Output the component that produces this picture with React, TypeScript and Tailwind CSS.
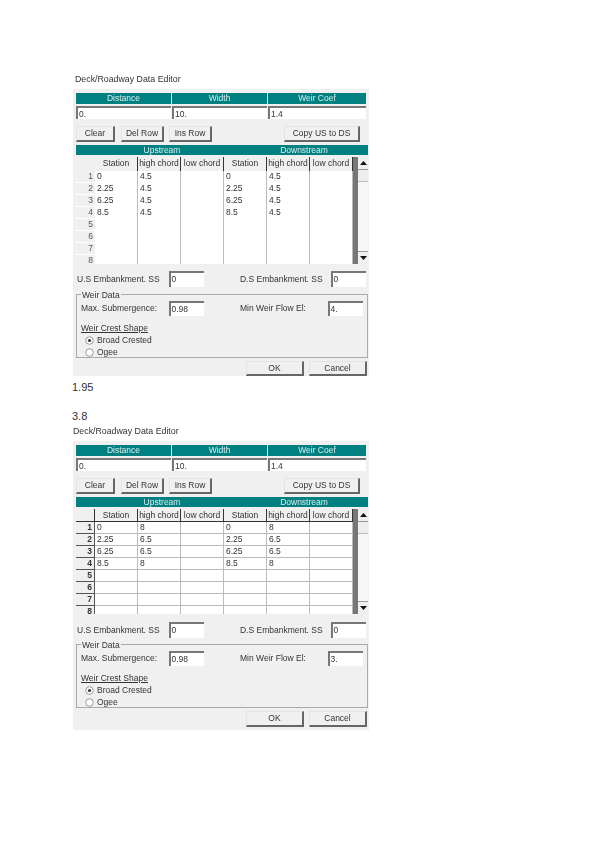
import React from "react";

type Row = string[];
type DialogProps = {
  distance: string;
  width: string;
  coef: string;
  rows: Row[];
  submergence: string;
  minWeir: string;
  gridLines: boolean;
  panelClass: string;
  tableClass: string;
  headClass: string;
  embClass: string;
  groupClass: string;
  okClass: string;
};

const cols = "grid-cols-[19px_43px_43px_43px_43px_43px_43px]";

function Sunken({ value, className }: { value: string; className: string }) {
  return (
    <div className={`bg-white border-t-2 border-l-2 border-t-[#777] border-l-[#777] pl-px leading-[12px] text-[8.5px] text-[#333] ${className}`}>
      {value}
    </div>
  );
}

function Btn({ label, className }: { label: string; className: string }) {
  return (
    <div className={`flex items-center justify-center bg-[#f0f0f0] border border-[#e4e4e4] border-r-2 border-b-2 border-r-[#666] border-b-[#666] text-[8.5px] text-[#333] ${className}`}>
      {label}
    </div>
  );
}

function Radio({ on }: { on: boolean }) {
  return (
    <svg width="9" height="9" viewBox="0 0 9 9">
      <circle cx="4.5" cy="4.5" r="3.8" fill="#fff" stroke="#999" />
      {on && <circle cx="4.5" cy="4.5" r="1.6" fill="#333" />}
    </svg>
  );
}

function Arrow({ up }: { up: boolean }) {
  return (
    <svg width="7" height="4" viewBox="0 0 7 4">
      <path d={up ? "M0 4 L3.5 0 L7 4 Z" : "M0 0 L3.5 4 L7 0 Z"} fill="#111" />
    </svg>
  );
}

function Dialog({ distance, width, coef, rows, submergence, minWeir, gridLines, panelClass, tableClass, headClass, embClass, groupClass, okClass }: DialogProps) {
  const heads = ["Station", "high chord", "low chord", "Station", "high chord", "low chord"];
  const line = gridLines ? "border-b border-[#bbb]" : "";
  return (
    <div className={`w-[296px] bg-[#f0f0f0] px-[3px] pt-[4px] text-[8.5px] text-[#333] font-['Liberation_Sans',sans-serif] ${panelClass}`}>
      <div className="grid grid-cols-[95px_95px_98px] gap-x-[1px]">
        {["Distance", "Width", "Weir Coef"].map((t) => (
          <div key={t} className="h-[11px] bg-[#008080] text-[#d8eeee] text-center leading-[11px]">{t}</div>
        ))}
      </div>
      <div className="grid grid-cols-[95px_95px_98px] gap-x-[1px] mt-[2px]">
        <Sunken value={distance} className="h-[13px]" />
        <Sunken value={width} className="h-[13px]" />
        <Sunken value={coef} className="h-[13px]" />
      </div>
      <div className="flex mt-[7px] h-[16px]">
        <Btn label="Clear" className="w-[39px]" />
        <Btn label="Del Row" className="w-[43px] ml-[6px]" />
        <Btn label="Ins Row" className="w-[43px] ml-[5px]" />
        <Btn label="Copy US to DS" className="w-[76px] ml-[72px]" />
      </div>
      <div className="flex h-[10px] mt-[3px] w-[292px] bg-[#008080] text-[#d8eeee] leading-[10px]">
        <div className="w-[146px] text-center pl-[26px]">Upstream</div>
        <div className="w-[146px] text-center pl-[18px]">Downstream</div>
      </div>
      <div className={`flex mt-[2px] w-[292px] overflow-hidden ${tableClass}`}>
        <div className="w-[277px] h-full overflow-hidden bg-white">
          <div className={`grid ${cols} bg-[#f0f0f0] ${headClass}`}>
            <div className={gridLines ? "border-r border-b border-[#333]" : ""} />
            {heads.map((h, i) => (
              <div key={i} className={`text-center leading-[12px] whitespace-nowrap overflow-hidden border-r ${gridLines ? "border-b border-[#333]" : "border-[#333]"}`}>{h}</div>
            ))}
          </div>
          {rows.map((r, i) => (
            <div key={i} className={`grid ${cols} h-[12px]`}>
              <div className={`bg-[#f0f0f0] text-right pr-[2px] leading-[11px] ${gridLines ? "font-bold border-r border-b border-[#555]" : "text-[#555] border-b border-white"}`}>{i + 1}</div>
              {r.map((c, j) => (
                <div key={j} className={`pl-[2px] leading-[11px] border-r border-[#bbb] ${line}`}>{c}</div>
              ))}
            </div>
          ))}
        </div>
        <div className="w-[15px] h-full flex">
          <div className="w-[5px] bg-[#777]" />
          <div className="flex-1 flex flex-col bg-[#f6f6f6]">
            <div className="h-[13px] flex items-center justify-center bg-[#f0f0f0] border-b border-[#999]"><Arrow up /></div>
            <div className="h-[12px] bg-[#eee] border-b border-[#bbb]" />
            <div className="flex-1" />
            <div className="h-[13px] flex items-center justify-center bg-[#f0f0f0] border-t border-[#999]"><Arrow up={false} /></div>
          </div>
        </div>
      </div>
      <div className={`flex items-start h-[16px] ${embClass}`}>
        <div className="w-[94px] leading-[16px] pl-[1px] whitespace-nowrap">U.S Embankment. SS</div>
        <Sunken value="0" className="w-[36px] h-[16px]" />
        <div className="w-[91px] ml-[36px] leading-[16px] whitespace-nowrap">D.S Embankment. SS</div>
        <Sunken value="0" className="w-[36px] h-[16px] ml-[1px]" />
      </div>
      <div className={`relative h-[64px] border border-[#aaa] w-[292px] px-[4px] pt-[6px] ${groupClass}`}>
        <div className="absolute -top-[5px] left-[4px] bg-[#f0f0f0] px-[1px] leading-[10px]">Weir Data</div>
        <div className="flex items-start h-[15px]">
          <div className="w-[89px] leading-[15px] whitespace-nowrap">Max. Submergence:</div>
          <Sunken value={submergence} className="w-[36px] h-[15px]" />
          <div className="w-[88px] ml-[36px] leading-[15px] whitespace-nowrap">Min Weir Flow El:</div>
          <Sunken value={minWeir} className="w-[36px] h-[15px] ml-[1px]" />
        </div>
        <div className="mt-[7px] underline leading-[10px]">Weir Crest Shape</div>
        <div className="flex items-center gap-[3px] pl-[4px] mt-[1px] h-[12px]"><Radio on /><span>Broad Crested</span></div>
        <div className="flex items-center gap-[3px] pl-[4px] h-[12px]"><Radio on={false} /><span>Ogee</span></div>
      </div>
      <div className={`flex justify-end mt-[3px] -mr-[1px] ${okClass}`}>
        <Btn label="OK" className="w-[58px]" />
        <Btn label="Cancel" className="w-[58px] ml-[5px]" />
      </div>
    </div>
  );
}

export default function App() {
  const blank = ["", "", "", "", "", ""];
  const upper: Row[] = [
    ["0", "4.5", "", "0", "4.5", ""],
    ["2.25", "4.5", "", "2.25", "4.5", ""],
    ["6.25", "4.5", "", "6.25", "4.5", ""],
    ["8.5", "4.5", "", "8.5", "4.5", ""],
    blank,
    blank,
    blank,
    blank,
  ];
  const lower: Row[] = [
    ["0", "8", "", "0", "8", ""],
    ["2.25", "6.5", "", "2.25", "6.5", ""],
    ["6.25", "6.5", "", "6.25", "6.5", ""],
    ["8.5", "8", "", "8.5", "8", ""],
    blank,
    blank,
    blank,
    blank,
  ];
  return (
    <div className="w-[600px] h-[848px] bg-white pl-[73px] pt-[74px] font-['Liberation_Sans',sans-serif] overflow-hidden">
      <div className="h-[15px] pl-[2px] leading-[11px] text-[8.8px] text-[#333] blur-[0.4px]">Deck/Roadway Data Editor</div>
      <div className="blur-[0.4px]">
        <Dialog distance="0." width="10." coef="1.4" rows={upper} submergence="0.98" minWeir="4." gridLines={false}
          panelClass="h-[287px]" tableClass="h-[107px]" headClass="h-[14px]" embClass="mt-[7px]" groupClass="mt-[7px]" okClass="h-[15px]" />
      </div>
      <div className="text-[11px] text-[#333] leading-[13px] -ml-[1px] mt-[5px]">1.95</div>
      <div className="text-[11px] text-[#333] leading-[13px] -ml-[1px] mt-[16px]">3.8</div>
      <div className="h-[16px] leading-[12px] text-[8.8px] text-[#333] blur-[0.4px] mt-[2px]">Deck/Roadway Data Editor</div>
      <div className="blur-[0.4px]">
        <Dialog distance="0." width="10." coef="1.4" rows={lower} submergence="0.98" minWeir="3." gridLines
          panelClass="h-[289px]" tableClass="h-[105px]" headClass="h-[13px]" embClass="mt-[8px]" groupClass="mt-[6px]" okClass="h-[16px]" />
      </div>
    </div>
  );
}
